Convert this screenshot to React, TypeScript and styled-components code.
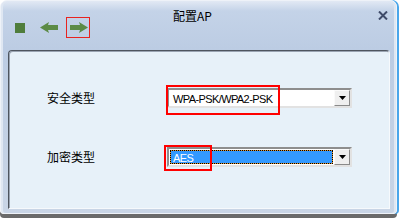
import styled, { createGlobalStyle } from "styled-components";

const GlobalStyle = createGlobalStyle`
  html, body {
    margin: 0;
    padding: 0;
    background: #ffffff;
  }
  body {
    width: 400px;
    height: 218px;
    overflow: hidden;
    font-family: "Liberation Sans", "Noto Sans CJK SC", sans-serif;
  }
`;

type Option = { label: string; value: string; focused?: boolean; mark: { left: number; top: number; width: number; height: number } };

const rows: Option[] = [
  { label: "安全类型", value: "WPA-PSK/WPA2-PSK", mark: { left: -3, top: -5, width: 114, height: 30 } },
  { label: "加密类型", value: "AES", focused: true, mark: { left: -5, top: -4, width: 48, height: 26 } },
];

const Arrow = ({ dir }: { dir: "left" | "right" }) => (
  <svg width="18" height="11" viewBox="0 0 18 11">
    <polygon
      fill="#5c8b46"
      points="0,3 10,3 9,0 18,5.5 9,11 10,8 0,8"
      transform={dir === "left" ? "translate(18 0) scale(-1 1)" : undefined}
    />
  </svg>
);

const App = () => {
  return (
    <>
      <GlobalStyle />
      <StWindow>
        <StHeader>
          <StToolbar>
            <StStop />
            <StToolButton>
              <Arrow dir="left" />
            </StToolButton>
            <StToolButton $marked>
              <Arrow dir="right" />
            </StToolButton>
          </StToolbar>
          <StTitle>配置AP</StTitle>
          <StClose>
            <svg width="10" height="9" viewBox="0 0 10 9">
              <path d="M1 0.5 L9 8.5 M9 0.5 L1 8.5" stroke="#3f4b69" strokeWidth="2" />
            </svg>
          </StClose>
        </StHeader>
        <StPanel>
          <StForm>
            {rows.map((row) => (
              <StRow key={row.label}>
                <StLabel>{row.label}</StLabel>
                <StCombo>
                  <StField $focused={row.focused}>{row.value}</StField>
                  <StDrop>
                    <svg width="7" height="4" viewBox="0 0 7 4">
                      <polygon points="0,0 7,0 3.5,4" fill="#000" />
                    </svg>
                  </StDrop>
                  <StMark
                    style={{
                      left: row.mark.left,
                      top: row.mark.top,
                      width: row.mark.width,
                      height: row.mark.height,
                    }}
                  />
                </StCombo>
              </StRow>
            ))}
          </StForm>
        </StPanel>
      </StWindow>
    </>
  );
};

export default App;

const StWindow = styled.div`
  box-sizing: border-box;
  width: 397px;
  height: 214px;
  display: flex;
  flex-direction: column;
  border: 1px solid #eef2f8;
  border-radius: 7px 7px 4px 4px;
  background: linear-gradient(#e2e9f4 0, #c4d3e8 10px, #bccce3 48px, #c9d5e6 100%);
  box-shadow: inset 2px 0 0 #dfe7f2, inset -2px 0 0 #dfe7f2, 2px 0 0 #4aa6ea,
    0 4px 0 #6a6a6a;
`;

const StHeader = styled.div`
  height: 49px;
  display: grid;
  grid-template-columns: 1fr auto 1fr;
  align-items: start;
`;

const StToolbar = styled.div`
  display: flex;
  align-items: center;
  padding: 16px 0 0 14px;
`;

const StStop = styled.div`
  width: 10px;
  height: 10px;
  background: #4f7d3b;
  margin-right: 15px;
`;

const StToolButton = styled.div<{ $marked?: boolean }>`
  box-sizing: border-box;
  height: 21px;
  display: flex;
  align-items: center;
  padding: ${(p) => (p.$marked ? "0 1px 0 3px" : "0")};
  margin-right: 7px;
  border: 1px solid ${(p) => (p.$marked ? "#e8231f" : "transparent")};
  margin-left: ${(p) => (p.$marked ? "0" : "-1px")};
`;

const StTitle = styled.div`
  padding-top: 8px;
  margin-right: 12px;
  font-family: "Noto Sans CJK SC", "Liberation Sans", sans-serif;
  font-size: 12px;
  line-height: 14px;
  color: #000;
`;

const StClose = styled.div`
  justify-self: end;
  margin: 10px 8px 0 0;
  display: flex;
`;

const StPanel = styled.div`
  flex: 1;
  margin: 0 6px 4px 7px;
  border: 1px solid;
  border-color: #4e555f #f6f9fc #f6f9fc #4e555f;
  border-radius: 4px 4px 0 0;
  background: #e7f1f9;
  box-shadow: inset 1px 1px 0 #9aa4b2;
`;

const StForm = styled.div`
  display: flex;
  flex-direction: column;
  gap: 39px;
  padding: 37px 0 0 38px;
`;

const StRow = styled.div`
  display: grid;
  grid-template-columns: 120px 185px;
  align-items: center;
`;

const StLabel = styled.div`
  font-family: "Noto Sans CJK SC", "Liberation Sans", sans-serif;
  font-size: 12px;
  line-height: 20px;
  color: #000;
`;

const StCombo = styled.div`
  position: relative;
  box-sizing: border-box;
  height: 20px;
  display: flex;
  align-items: stretch;
  border: 2px solid;
  border-color: #8e8e8e #e2e2e2 #e2e2e2 #8e8e8e;
  background: #ffffff;
`;

const StField = styled.div<{ $focused?: boolean }>`
  flex: 1;
  margin: 1px;
  padding: 0 2px;
  font-size: 11px;
  letter-spacing: -0.6px;
  line-height: 14px;
  color: ${(p) => (p.$focused ? "#ffffff" : "#000000")};
  border: 1px ${(p) => (p.$focused ? "dotted #000" : "solid transparent")};
  background: ${(p) =>
    p.$focused
      ? "linear-gradient(#3399ff, #3399ff) padding-box, linear-gradient(#e5932c, #e5932c) border-box"
      : "#ffffff"};
`;

const StDrop = styled.div`
  width: 16px;
  box-sizing: border-box;
  display: flex;
  align-items: center;
  justify-content: center;
  background: #efefef;
  border: 1px solid;
  border-color: #fafafa #8a8a8a #8a8a8a #fafafa;
`;

const StMark = styled.div`
  position: absolute;
  box-sizing: border-box;
  border: 2px solid #ff0000;
  pointer-events: none;
`;
